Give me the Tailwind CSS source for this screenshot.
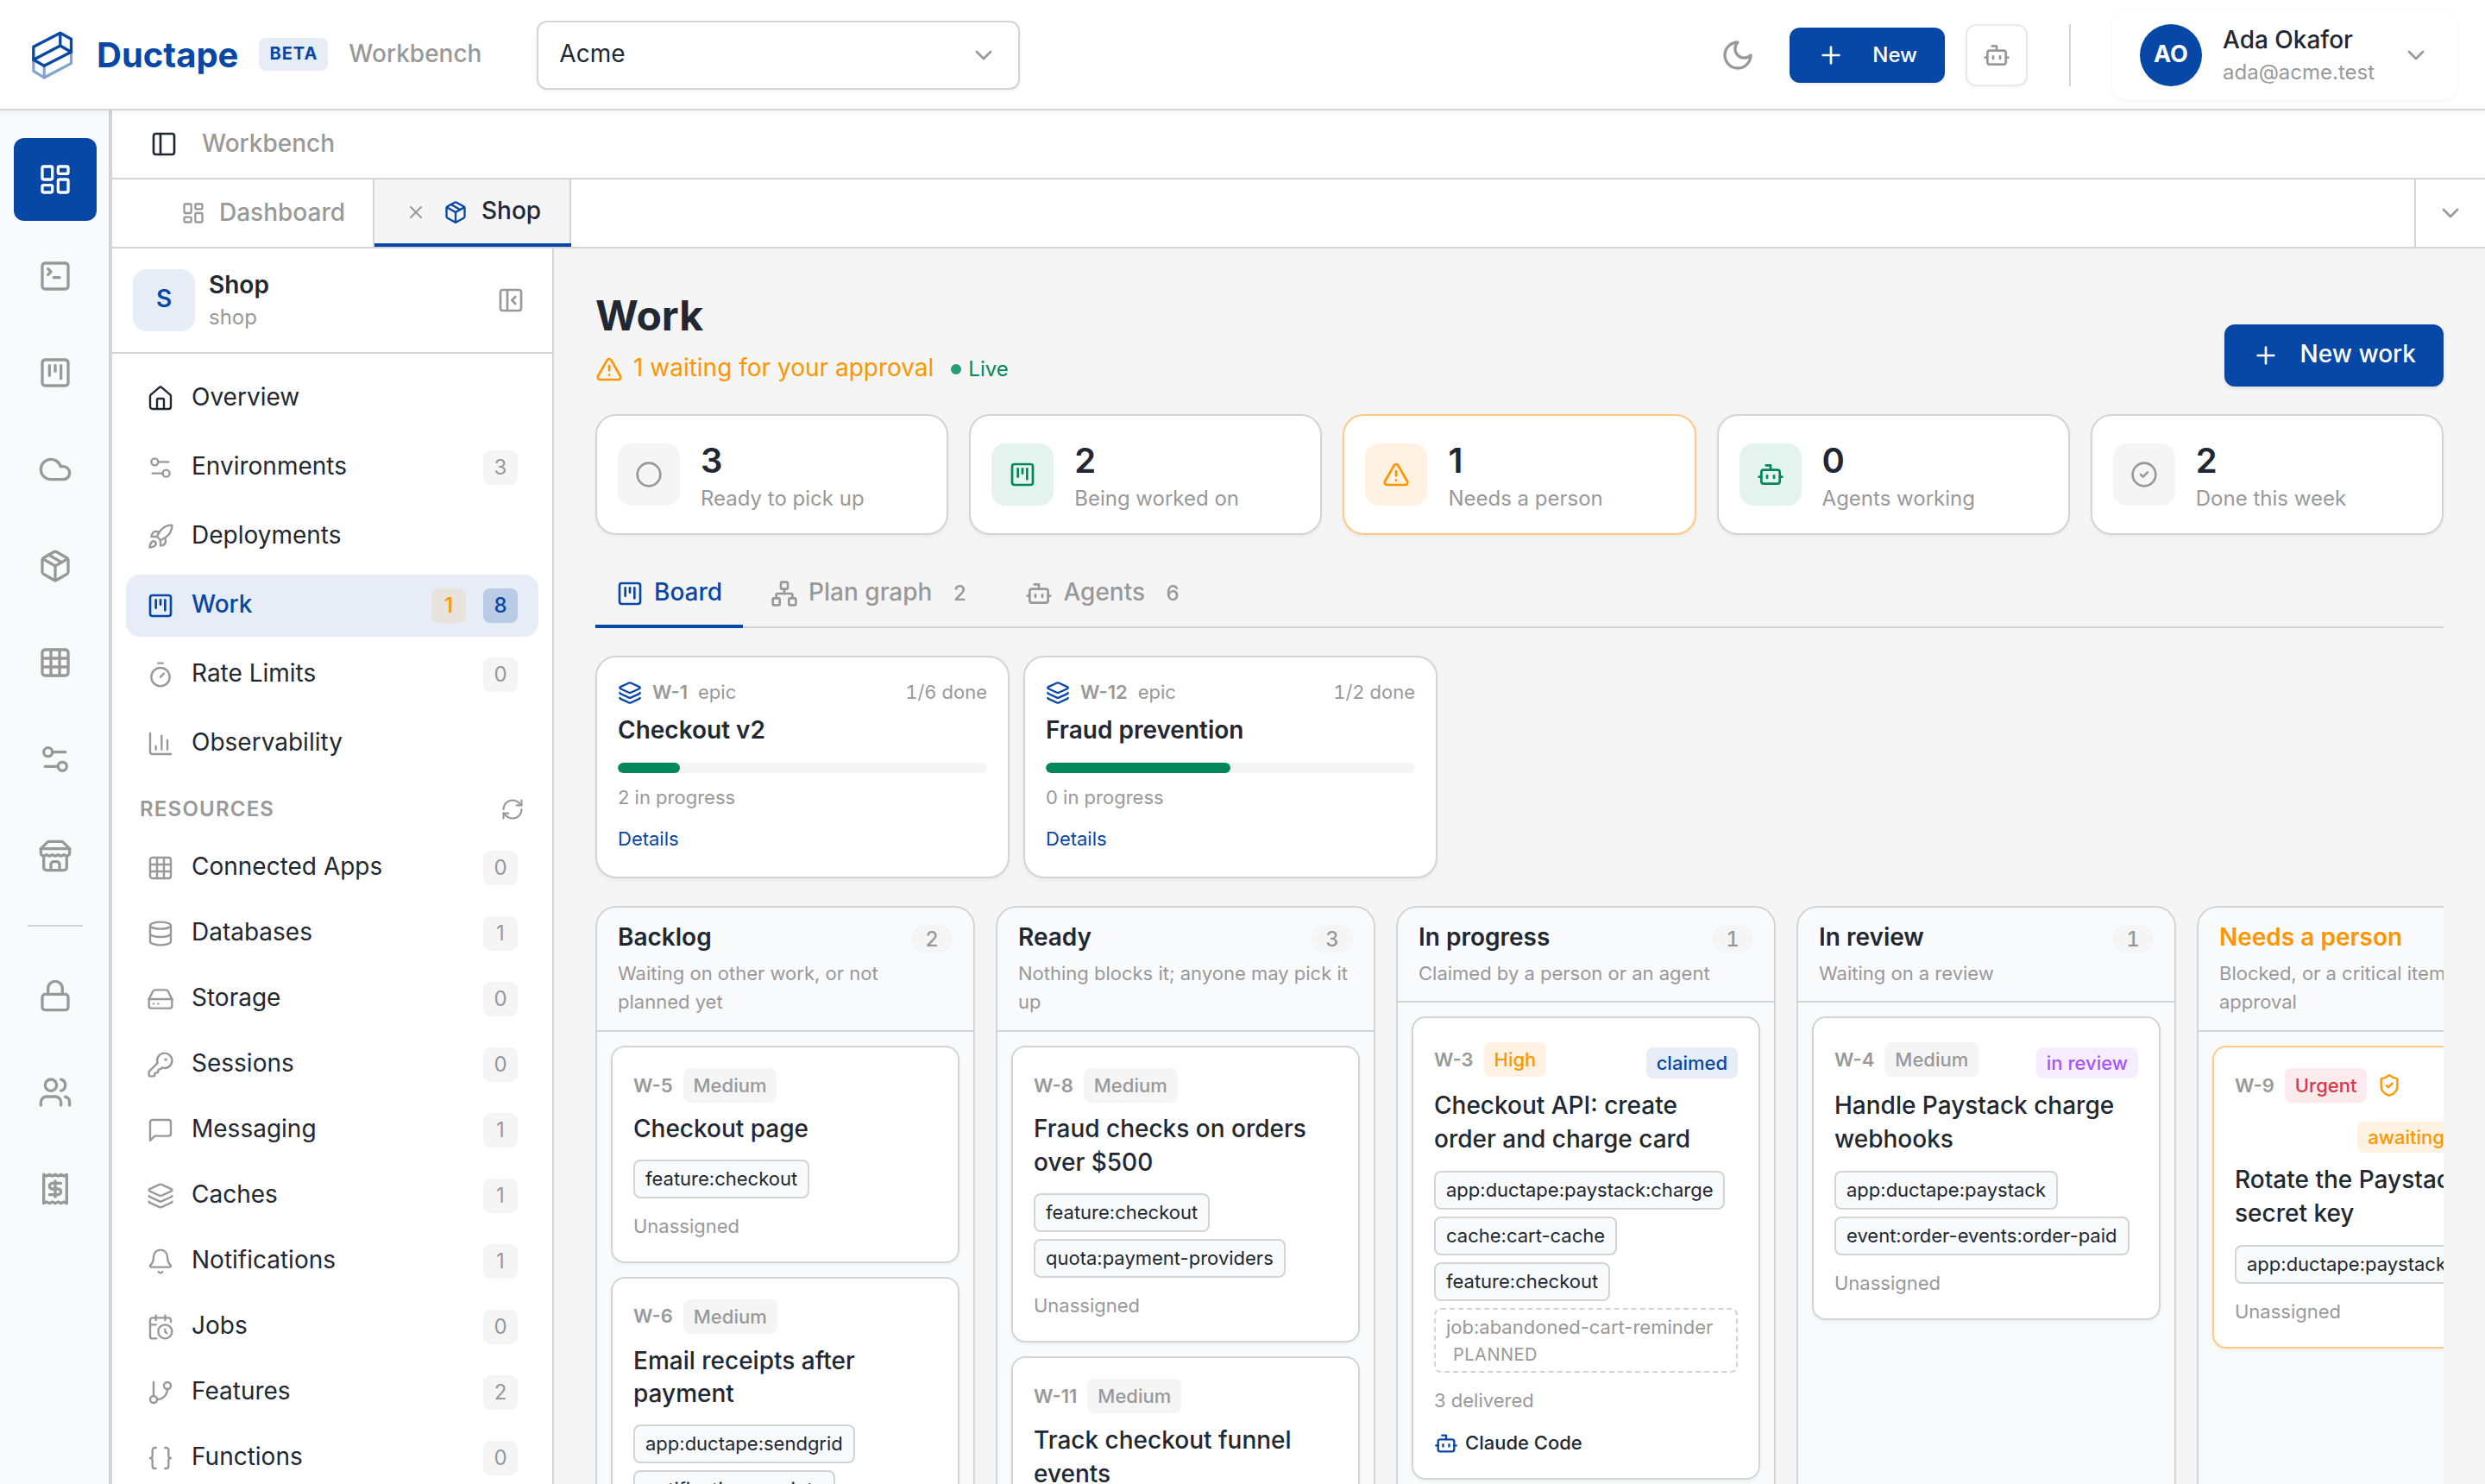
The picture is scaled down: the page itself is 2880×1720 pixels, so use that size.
<!DOCTYPE html>
<html lang="en">
<head>
<meta charset="utf-8">
<title>Ductape Workbench</title>
<script src="https://cdn.jsdelivr.net/npm/@tailwindcss/browser@4"></script>
</head>
<body class="w-[2880px] h-[1720px] overflow-hidden bg-[#f5f5f5] font-['Inter',sans-serif] text-[28px] leading-10 text-[#222831]">

<!-- icon sprite -->
<svg width="0" height="0" class="absolute" aria-hidden="true">
<defs>
<symbol id="dash" viewBox="0 0 24 24"><rect x="3" y="3" width="7" height="9" rx="1"/><rect x="14" y="3" width="7" height="5" rx="1"/><rect x="14" y="12" width="7" height="9" rx="1"/><rect x="3" y="16" width="7" height="5" rx="1"/></symbol>
<symbol id="terminal" viewBox="0 0 24 24"><path d="m7 11 2-2-2-2"/><path d="M11 13h4"/><rect x="3" y="3" width="18" height="18" rx="2"/></symbol>
<symbol id="kanban" viewBox="0 0 24 24"><rect x="3" y="3" width="18" height="18" rx="2"/><path d="M8 7v7"/><path d="M12 7v4"/><path d="M16 7v9"/></symbol>
<symbol id="cloud" viewBox="0 0 24 24"><path d="M17.5 19H9a7 7 0 1 1 6.71-9h1.79a4.5 4.5 0 1 1 0 9Z"/></symbol>
<symbol id="package" viewBox="0 0 24 24"><path d="M11 21.73a2 2 0 0 0 2 0l7-4A2 2 0 0 0 21 16V8a2 2 0 0 0-1-1.73l-7-4a2 2 0 0 0-2 0l-7 4A2 2 0 0 0 3 8v8a2 2 0 0 0 1 1.73z"/><path d="M12 22V12"/><path d="M3.3 7 12 12l8.7-5"/><path d="m7.5 4.27 9 5.15"/></symbol>
<symbol id="grid" viewBox="0 0 24 24"><rect x="3" y="3" width="18" height="18" rx="2"/><path d="M3 9h18"/><path d="M3 15h18"/><path d="M9 3v18"/><path d="M15 3v18"/></symbol>
<symbol id="settings" viewBox="0 0 24 24"><path d="M14 17H5"/><path d="M19 7h-9"/><circle cx="17" cy="17" r="3"/><circle cx="7" cy="7" r="3"/></symbol>
<symbol id="store" viewBox="0 0 24 24"><path d="m2 7 4.41-4.41A2 2 0 0 1 7.83 2h8.34a2 2 0 0 1 1.42.59L22 7"/><path d="M4 12v8a2 2 0 0 0 2 2h12a2 2 0 0 0 2-2v-8"/><path d="M15 22v-4a2 2 0 0 0-2-2h-2a2 2 0 0 0-2 2v4"/><path d="M2 7h20"/><path d="M22 7v3a2 2 0 0 1-2 2a2.7 2.7 0 0 1-1.59-.63.7.7 0 0 0-.82 0A2.7 2.7 0 0 1 16 12a2.7 2.7 0 0 1-1.59-.63.7.7 0 0 0-.82 0A2.7 2.7 0 0 1 12 12a2.7 2.7 0 0 1-1.59-.63.7.7 0 0 0-.82 0A2.7 2.7 0 0 1 8 12a2.7 2.7 0 0 1-1.59-.63.7.7 0 0 0-.82 0A2.7 2.7 0 0 1 4 12a2 2 0 0 1-2-2V7"/></symbol>
<symbol id="lock" viewBox="0 0 24 24"><rect x="3" y="11" width="18" height="11" rx="2"/><path d="M7 11V7a5 5 0 0 1 10 0v4"/></symbol>
<symbol id="users" viewBox="0 0 24 24"><path d="M16 21v-2a4 4 0 0 0-4-4H6a4 4 0 0 0-4 4v2"/><circle cx="9" cy="7" r="4"/><path d="M22 21v-2a4 4 0 0 0-3-3.87"/><path d="M16 3.13a4 4 0 0 1 0 7.75"/></symbol>
<symbol id="receipt" viewBox="0 0 24 24"><path d="M4 2v20l2-1 2 1 2-1 2 1 2-1 2 1 2-1 2 1V2l-2 1-2-1-2 1-2-1-2 1-2-1-2 1Z"/><path d="M16 8h-6a2 2 0 1 0 0 4h4a2 2 0 1 1 0 4H8"/><path d="M12 17.5v-11"/></symbol>
<symbol id="house" viewBox="0 0 24 24"><path d="M15 21v-8a1 1 0 0 0-1-1h-4a1 1 0 0 0-1 1v8"/><path d="M3 10a2 2 0 0 1 .709-1.528l7-5.999a2 2 0 0 1 2.582 0l7 5.999A2 2 0 0 1 21 10v9a2 2 0 0 1-2 2H5a2 2 0 0 1-2-2z"/></symbol>
<symbol id="rocket" viewBox="0 0 24 24"><path d="M4.5 16.5c-1.5 1.26-2 5-2 5s3.74-.5 5-2c.71-.84.7-2.13-.09-2.91a2.18 2.18 0 0 0-2.91-.09z"/><path d="m12 15-3-3a22 22 0 0 1 2-3.95A12.88 12.88 0 0 1 22 2c0 2.72-.78 7.5-6 11a22.35 22.35 0 0 1-4 2z"/><path d="M9 12H4s.55-3.03 2-4c1.62-1.08 5 0 5 0"/><path d="M12 15v5s3.03-.55 4-2c1.08-1.62 0-5 0-5"/></symbol>
<symbol id="timer" viewBox="0 0 24 24"><path d="M10 2h4"/><path d="m12 14 3-3"/><circle cx="12" cy="14" r="8"/></symbol>
<symbol id="chart" viewBox="0 0 24 24"><path d="M3 3v16a2 2 0 0 0 2 2h16"/><path d="M18 17V9"/><path d="M13 17V5"/><path d="M8 17v-3"/></symbol>
<symbol id="database" viewBox="0 0 24 24"><ellipse cx="12" cy="5" rx="9" ry="3"/><path d="M3 5v14a9 3 0 0 0 18 0V5"/><path d="M3 12a9 3 0 0 0 18 0"/></symbol>
<symbol id="drive" viewBox="0 0 24 24"><path d="M22 12H2"/><path d="M5.45 5.11 2 12v6a2 2 0 0 0 2 2h16a2 2 0 0 0 2-2v-6l-3.45-6.89A2 2 0 0 0 16.76 4H7.24a2 2 0 0 0-1.79 1.11z"/><path d="M6 16h.01"/><path d="M10 16h.01"/></symbol>
<symbol id="key" viewBox="0 0 24 24"><path d="M2.586 17.414A2 2 0 0 0 2 18.828V21a1 1 0 0 0 1 1h3a1 1 0 0 0 1-1v-1a1 1 0 0 1 1-1h1a1 1 0 0 0 1-1v-1a1 1 0 0 1 1-1h.172a2 2 0 0 0 1.414-.586l.814-.814a6.5 6.5 0 1 0-4-4z"/><circle cx="16.5" cy="7.5" r=".5"/></symbol>
<symbol id="message" viewBox="0 0 24 24"><path d="M21 15a2 2 0 0 1-2 2H7l-4 4V5a2 2 0 0 1 2-2h14a2 2 0 0 1 2 2z"/></symbol>
<symbol id="layers" viewBox="0 0 24 24"><path d="M12.83 2.18a2 2 0 0 0-1.66 0L2.6 6.08a1 1 0 0 0 0 1.83l8.58 3.91a2 2 0 0 0 1.66 0l8.58-3.9a1 1 0 0 0 0-1.83z"/><path d="M2 12a1 1 0 0 0 .58.91l8.6 3.91a2 2 0 0 0 1.65 0l8.58-3.9A1 1 0 0 0 22 12"/><path d="M2 17a1 1 0 0 0 .58.91l8.6 3.91a2 2 0 0 0 1.65 0l8.58-3.9A1 1 0 0 0 22 17"/></symbol>
<symbol id="bell" viewBox="0 0 24 24"><path d="M10.268 21a2 2 0 0 0 3.464 0"/><path d="M3.262 15.326A1 1 0 0 0 4 17h16a1 1 0 0 0 .74-1.673C19.41 13.956 18 12.499 18 8A6 6 0 0 0 6 8c0 4.499-1.411 5.956-2.738 7.326"/></symbol>
<symbol id="calclock" viewBox="0 0 24 24"><path d="M21 7.5V6a2 2 0 0 0-2-2H5a2 2 0 0 0-2 2v14a2 2 0 0 0 2 2h3.5"/><path d="M16 2v4"/><path d="M8 2v4"/><path d="M3 10h5"/><path d="M17.5 17.5 16 16.3V14"/><circle cx="16" cy="16" r="6"/></symbol>
<symbol id="branch" viewBox="0 0 24 24"><path d="M6 3v12"/><circle cx="18" cy="6" r="3"/><circle cx="6" cy="18" r="3"/><path d="M18 9a9 9 0 0 1-9 9"/></symbol>
<symbol id="braces" viewBox="0 0 24 24"><path d="M8 3H7a2 2 0 0 0-2 2v5a2 2 0 0 1-2 2 2 2 0 0 1 2 2v5c0 1.1.9 2 2 2h1"/><path d="M16 21h1a2 2 0 0 0 2-2v-5c0-1.1.9-2 2-2a2 2 0 0 1-2-2V5a2 2 0 0 0-2-2h-1"/></symbol>
<symbol id="panel" viewBox="0 0 24 24"><rect x="3" y="3" width="18" height="18" rx="2"/><path d="M9 3v18"/></symbol>
<symbol id="panelclose" viewBox="0 0 24 24"><rect x="3" y="3" width="18" height="18" rx="2"/><path d="M9 3v18"/><path d="m16 15-3-3 3-3"/></symbol>
<symbol id="refresh" viewBox="0 0 24 24"><path d="M3 12a9 9 0 0 1 9-9 9.75 9.75 0 0 1 6.74 2.74L21 8"/><path d="M21 3v5h-5"/><path d="M21 12a9 9 0 0 1-9 9 9.75 9.75 0 0 1-6.74-2.74L3 16"/><path d="M8 16H3v5"/></symbol>
<symbol id="alert" viewBox="0 0 24 24"><path d="m21.73 18-8-14a2 2 0 0 0-3.48 0l-8 14A2 2 0 0 0 4 21h16a2 2 0 0 0 1.73-3"/><path d="M12 9v4"/><path d="M12 17h.01"/></symbol>
<symbol id="circle" viewBox="0 0 24 24"><circle cx="12" cy="12" r="10"/></symbol>
<symbol id="check" viewBox="0 0 24 24"><circle cx="12" cy="12" r="10"/><path d="m9 12 2 2 4-4"/></symbol>
<symbol id="network" viewBox="0 0 24 24"><rect x="16" y="16" width="6" height="6" rx="1"/><rect x="2" y="16" width="6" height="6" rx="1"/><rect x="9" y="2" width="6" height="6" rx="1"/><path d="M5 16v-3a1 1 0 0 1 1-1h12a1 1 0 0 1 1 1v3"/><path d="M12 12V8"/></symbol>
<symbol id="bot" viewBox="0 0 24 24"><path d="M12 8V4H8"/><rect x="4" y="8" width="16" height="12" rx="2"/><path d="M2 14h2"/><path d="M20 14h2"/><path d="M15 13v2"/><path d="M9 13v2"/></symbol>
<symbol id="shield" viewBox="0 0 24 24"><path d="M20 13c0 5-3.5 7.5-7.66 8.95a1 1 0 0 1-.67-.01C7.5 20.5 4 18 4 13V6a1 1 0 0 1 1-1c2 0 4.5-1.2 6.24-2.72a1.17 1.17 0 0 1 1.52 0C14.51 3.81 17 5 19 5a1 1 0 0 1 1 1z"/><path d="m9 12 2 2 4-4"/></symbol>
<symbol id="moon" viewBox="0 0 24 24"><path d="M12 3a6 6 0 0 0 9 9 9 9 0 1 1-9-9Z"/></symbol>
<symbol id="plus" viewBox="0 0 24 24"><path d="M5 12h14"/><path d="M12 5v14"/></symbol>
<symbol id="x" viewBox="0 0 24 24"><path d="M18 6 6 18"/><path d="m6 6 12 12"/></symbol>
<symbol id="down" viewBox="0 0 24 24"><path d="m6 9 6 6 6-6"/></symbol>
</defs>
</svg>

<div class="flex h-[1720px] flex-col [&_svg]:shrink-0 [&_svg]:fill-none [&_svg]:stroke-current [&_svg]:stroke-2 [&_svg]:[stroke-linecap:round] [&_svg]:[stroke-linejoin:round]">

<!-- top bar -->
<header class="relative z-10 flex h-32 shrink-0 items-center border-b-2 border-[#d4d4d4] bg-white pt-0.5 pr-8 pl-9 text-[#999999] shadow-[0_2px_6px_rgba(0,0,0,0.06)]">
  <svg class="size-12" viewBox="35.5 40 48 48" overflow="visible">
    <g stroke="#83a3d3" stroke-width="3.2"><path d="M38.3 69.3v13l12.4 7.7L82 73.3v-13"/><path d="M50.7 76.3V90"/></g>
    <g stroke="#0747a6" stroke-width="3.3"><path d="M69.3 38.3 38.3 54.3v15l12.4 7L82 60.3v-15z"/><path d="M69.3 38.3V53L38.3 69.3"/><path d="M69.3 53 82 60.3"/></g>
  </svg>
  <span class="ml-7 text-[40px] leading-[48px] font-bold text-[#0747a6]">Ductape</span>
  <span class="-mt-0.5 ml-6 flex h-[38px] items-center rounded-lg bg-[#e6edf6] px-3 pb-[3px] text-[20px] leading-[30px] font-bold tracking-wider text-[#0747a6]">BETA</span>
  <span class="ml-6 w-[152px] pb-1 font-medium whitespace-nowrap">Workbench</span>
  <div class="ml-[66px] flex h-20 w-[560px] items-center justify-between rounded-xl border-2 border-[#d4d4d4] bg-white pr-6 pl-6 shadow-[0_2px_4px_rgba(0,0,0,0.05)]">
    <span class="pb-1 text-[#222831]">Acme</span>
    <svg class="size-8"><use href="#down"/></svg>
  </div>
  <div class="ml-auto flex items-center">
    <div class="flex size-[72px] items-center justify-center"><svg class="size-10"><use href="#moon"/></svg></div>
    <div class="ml-6 flex h-16 items-center gap-8 rounded-xl bg-[#0747a6] px-8 text-[24px] leading-8 font-medium text-white shadow-[0_2px_4px_rgba(0,0,0,0.08)]"><svg class="size-8"><use href="#plus"/></svg>New</div>
    <div class="ml-6 flex size-[72px] items-center justify-center rounded-xl border-2 border-[#e9e9e9] bg-white shadow-[0_2px_4px_rgba(0,0,0,0.04)]"><svg class="size-8"><use href="#bot"/></svg></div>
    <div class="ml-12 h-[72px] w-0.5 bg-[#d4d4d4]"></div>
    <div class="ml-12 flex h-[104px] w-[400px] items-center rounded-2xl bg-white px-8 shadow-[0_1px_4px_rgba(0,0,0,0.06)]">
      <div class="flex size-[72px] items-center justify-center rounded-full bg-[#0747a6] pb-[3px] text-[27px] font-bold text-white">AO</div>
      <div class="ml-6">
        <div class="-mt-0.5 mb-0.5 leading-10 font-medium text-[#222831]">Ada Okafor</div>
        <div class="text-[24px] leading-8">ada@acme.test</div>
      </div>
      <svg class="ml-auto size-8"><use href="#down"/></svg>
    </div>
  </div>
</header>

<div class="flex min-h-0 flex-1">

<!-- icon rail -->
<nav class="flex w-[130px] shrink-0 flex-col gap-4 border-r-4 border-[#d4d4d4] bg-[#f9fafc] px-4 pt-8 text-[#999999]">
  <div class="flex h-24 w-24 shrink-0 items-center justify-center rounded-xl bg-[#0747a6] text-white"><svg class="size-10"><use href="#dash"/></svg></div>
  <div class="flex h-24 w-24 shrink-0 items-center justify-center"><svg class="size-10"><use href="#terminal"/></svg></div>
  <div class="flex h-24 w-24 shrink-0 items-center justify-center"><svg class="size-10"><use href="#kanban"/></svg></div>
  <div class="flex h-24 w-24 shrink-0 items-center justify-center"><svg class="size-10"><use href="#cloud"/></svg></div>
  <div class="flex h-24 w-24 shrink-0 items-center justify-center"><svg class="size-10"><use href="#package"/></svg></div>
  <div class="flex h-24 w-24 shrink-0 items-center justify-center"><svg class="size-10"><use href="#grid"/></svg></div>
  <div class="flex h-24 w-24 shrink-0 items-center justify-center"><svg class="size-10"><use href="#settings"/></svg></div>
  <div class="flex h-24 w-24 shrink-0 items-center justify-center"><svg class="size-10"><use href="#store"/></svg></div>
  <div class="my-4 ml-4 h-0.5 w-16 shrink-0 bg-[#d4d4d4]"></div>
  <div class="flex h-24 w-24 shrink-0 items-center justify-center"><svg class="size-10"><use href="#lock"/></svg></div>
  <div class="flex h-24 w-24 shrink-0 items-center justify-center"><svg class="size-10"><use href="#users"/></svg></div>
  <div class="flex h-24 w-24 shrink-0 items-center justify-center"><svg class="size-10"><use href="#receipt"/></svg></div>
</nav>

<div class="flex min-w-0 flex-1 flex-col">

<!-- breadcrumb -->
<div class="flex h-20 shrink-0 items-center border-b-2 border-[#d4d4d4] bg-white pl-11 text-[#999999]">
  <svg class="size-8 text-[#222831]"><use href="#panel"/></svg>
  <span class="ml-7 pb-0.5 font-medium">Workbench</span>
</div>

<!-- tab strip -->
<div class="flex h-20 shrink-0 border-b-2 border-[#d4d4d4] bg-white text-[#999999]">
  <div class="flex w-[304px] items-center gap-4 border-r-2 border-[#d4d4d4] pl-20"><svg class="size-7"><use href="#dash"/></svg><span class="pb-0.5 font-medium">Dashboard</span></div>
  <div class="relative flex w-[228px] items-center border-r-2 border-[#d4d4d4] bg-[#f5f5f5] pb-0.5 pl-9">
    <svg class="size-6"><use href="#x"/></svg>
    <svg class="ml-5 size-7 text-[#0747a6]"><use href="#package"/></svg>
    <span class="ml-4 pb-1 font-medium text-[#222831]">Shop</span>
    <div class="absolute -right-0.5 bottom-0 left-0 h-1 bg-[#0747a6]"></div>
  </div>
  <div class="ml-auto flex w-[82px] items-center justify-center border-l-2 border-[#d4d4d4]"><svg class="size-8"><use href="#down"/></svg></div>
</div>

<div class="flex min-h-0 flex-1">

<!-- product sidebar -->
<aside class="flex w-[512px] shrink-0 flex-col overflow-hidden border-r-2 border-[#d4d4d4] bg-white">
  <div class="flex h-[122px] shrink-0 items-center border-b-2 border-[#d4d4d4] pr-8 pl-6">
    <div class="flex size-[72px] items-center justify-center rounded-2xl bg-[#e6edf6] pb-1 font-semibold text-[#0747a6]">S</div>
    <div class="ml-4">
      <div class="-mt-0.5 mb-0.5 font-semibold">Shop</div>
      <div class="text-[24px] leading-8 text-[#999999]">shop</div>
    </div>
    <svg class="ml-auto size-8 text-[#999999]"><use href="#panelclose"/></svg>
  </div>

  <div class="flex shrink-0 flex-col gap-2 px-4 pt-4 [&_svg]:size-8 [&_svg]:stroke-[1.8] [&_svg]:text-[#999999]">
    <div class="flex h-[72px] items-center px-6"><svg class="text-[#222831]!"><use href="#house"/></svg><span class="ml-5 pb-1">Overview</span></div>
    <div class="flex h-[72px] items-center px-6"><svg><use href="#settings"/></svg><span class="ml-5 pb-1">Environments</span><span class="ml-auto flex size-10 items-center justify-center rounded-lg bg-[#f5f5f5] text-[24px] text-[#999999]">3</span></div>
    <div class="flex h-[72px] items-center px-6"><svg><use href="#rocket"/></svg><span class="ml-5 pb-1">Deployments</span></div>
    <div class="flex h-[72px] items-center rounded-2xl bg-[#e6edf6] px-6 font-medium text-[#0747a6]"><svg class="text-[#0747a6]! stroke-2!"><use href="#kanban"/></svg><span class="ml-5 pb-1">Work</span><span class="ml-auto flex size-10 items-center justify-center rounded-lg bg-[#ff9500]/10 text-[24px] text-[#ff9500]">1</span><span class="ml-5 flex size-10 items-center justify-center rounded-lg bg-[#0747a6]/20 text-[24px]">8</span></div>
    <div class="flex h-[72px] items-center px-6"><svg><use href="#timer"/></svg><span class="ml-5 pb-1">Rate Limits</span><span class="ml-auto flex size-10 items-center justify-center rounded-lg bg-[#f5f5f5] text-[24px] text-[#999999]">0</span></div>
    <div class="flex h-[72px] items-center px-6"><svg><use href="#chart"/></svg><span class="ml-5 pb-1">Observability</span></div>
  </div>

  <div class="flex h-[72px] shrink-0 items-center justify-between pt-2 pr-8 pl-8 text-[24px] leading-8 font-semibold tracking-wider text-[#999999]">RESOURCES<svg class="size-7 stroke-[1.8]!"><use href="#refresh"/></svg></div>

  <div class="flex shrink-0 flex-col gap-1 px-4 [&_svg]:size-8 [&_svg]:stroke-[1.8] [&_svg]:text-[#999999]">
    <div class="flex h-[72px] items-center px-6"><svg><use href="#grid"/></svg><span class="ml-5 pb-1">Connected Apps</span><span class="ml-auto flex size-10 items-center justify-center rounded-lg bg-[#f5f5f5] text-[24px] text-[#999999]">0</span></div>
    <div class="flex h-[72px] items-center px-6"><svg><use href="#database"/></svg><span class="ml-5 pb-1">Databases</span><span class="ml-auto flex size-10 items-center justify-center rounded-lg bg-[#f5f5f5] text-[24px] text-[#999999]">1</span></div>
    <div class="flex h-[72px] items-center px-6"><svg><use href="#drive"/></svg><span class="ml-5 pb-1">Storage</span><span class="ml-auto flex size-10 items-center justify-center rounded-lg bg-[#f5f5f5] text-[24px] text-[#999999]">0</span></div>
    <div class="flex h-[72px] items-center px-6"><svg><use href="#key"/></svg><span class="ml-5 pb-1">Sessions</span><span class="ml-auto flex size-10 items-center justify-center rounded-lg bg-[#f5f5f5] text-[24px] text-[#999999]">0</span></div>
    <div class="flex h-[72px] items-center px-6"><svg><use href="#message"/></svg><span class="ml-5 pb-1">Messaging</span><span class="ml-auto flex size-10 items-center justify-center rounded-lg bg-[#f5f5f5] text-[24px] text-[#999999]">1</span></div>
    <div class="flex h-[72px] items-center px-6"><svg><use href="#layers"/></svg><span class="ml-5 pb-1">Caches</span><span class="ml-auto flex size-10 items-center justify-center rounded-lg bg-[#f5f5f5] text-[24px] text-[#999999]">1</span></div>
    <div class="flex h-[72px] items-center px-6"><svg><use href="#bell"/></svg><span class="ml-5 pb-1">Notifications</span><span class="ml-auto flex size-10 items-center justify-center rounded-lg bg-[#f5f5f5] text-[24px] text-[#999999]">1</span></div>
    <div class="flex h-[72px] items-center px-6"><svg><use href="#calclock"/></svg><span class="ml-5 pb-1">Jobs</span><span class="ml-auto flex size-10 items-center justify-center rounded-lg bg-[#f5f5f5] text-[24px] text-[#999999]">0</span></div>
    <div class="flex h-[72px] items-center px-6"><svg><use href="#branch"/></svg><span class="ml-5 pb-1">Features</span><span class="ml-auto flex size-10 items-center justify-center rounded-lg bg-[#f5f5f5] text-[24px] text-[#999999]">2</span></div>
    <div class="flex h-[72px] items-center px-6"><svg><use href="#braces"/></svg><span class="ml-5 pb-1">Functions</span><span class="ml-auto flex size-10 items-center justify-center rounded-lg bg-[#f5f5f5] text-[24px] text-[#999999]">0</span></div>
  </div>
</aside>

<!-- work page -->
<main class="flex min-w-0 flex-1 flex-col overflow-hidden px-12 pt-[46px]">
  <div class="flex shrink-0 items-end justify-between">
    <div>
      <h1 class="text-[48px] leading-[64px] font-bold">Work</h1>
      <div class="mt-2.5 flex h-10 items-center text-[#ff9500]">
        <svg class="size-8"><use href="#alert"/></svg>
        <span class="ml-3 pb-1">1 waiting for your approval</span>
        <span class="ml-5 size-3 rounded-full bg-[#2b9b74]"></span>
        <span class="ml-2 text-[24px] leading-8 text-[#00875a]">Live</span>
      </div>
    </div>
    <div class="flex h-[72px] items-center rounded-xl bg-[#0747a6] px-8 font-medium text-white shadow-[0_2px_4px_rgba(0,0,0,0.1)]"><svg class="size-8"><use href="#plus"/></svg><span class="ml-6 pb-1">New work</span></div>
  </div>

  <!-- stats -->
  <div class="mt-8 grid shrink-0 grid-cols-5 gap-6">
    <div class="flex h-[140px] items-center gap-6 rounded-3xl border-2 border-[#d4d4d4] bg-white px-6 shadow-[0_2px_4px_rgba(0,0,0,0.05)]">
      <div class="flex size-[72px] items-center justify-center rounded-2xl bg-[#f5f5f5] text-[#999999]"><svg class="size-8"><use href="#circle"/></svg></div>
      <div><div class="text-[40px] leading-[56px] font-semibold">3</div><div class="text-[24px] leading-8 text-[#999999]">Ready to pick up</div></div>
    </div>
    <div class="flex h-[140px] items-center gap-6 rounded-3xl border-2 border-[#d4d4d4] bg-white px-6 shadow-[0_2px_4px_rgba(0,0,0,0.05)]">
      <div class="flex size-[72px] items-center justify-center rounded-2xl bg-[#e5f3ee] text-[#00875a]"><svg class="size-8"><use href="#kanban"/></svg></div>
      <div><div class="text-[40px] leading-[56px] font-semibold">2</div><div class="text-[24px] leading-8 text-[#999999]">Being worked on</div></div>
    </div>
    <div class="flex h-[140px] items-center gap-6 rounded-3xl border-2 border-[#ffca80] bg-white px-6 shadow-[0_2px_4px_rgba(0,0,0,0.05)]">
      <div class="flex size-[72px] items-center justify-center rounded-2xl bg-[#fff2e3] text-[#ff9500]"><svg class="size-8"><use href="#alert"/></svg></div>
      <div><div class="text-[40px] leading-[56px] font-semibold">1</div><div class="text-[24px] leading-8 text-[#999999]">Needs a person</div></div>
    </div>
    <div class="flex h-[140px] items-center gap-6 rounded-3xl border-2 border-[#d4d4d4] bg-white px-6 shadow-[0_2px_4px_rgba(0,0,0,0.05)]">
      <div class="flex size-[72px] items-center justify-center rounded-2xl bg-[#e5f3ee] text-[#00875a]"><svg class="size-8"><use href="#bot"/></svg></div>
      <div><div class="text-[40px] leading-[56px] font-semibold">0</div><div class="text-[24px] leading-8 text-[#999999]">Agents working</div></div>
    </div>
    <div class="flex h-[140px] items-center gap-6 rounded-3xl border-2 border-[#d4d4d4] bg-white px-6 shadow-[0_2px_4px_rgba(0,0,0,0.05)]">
      <div class="flex size-[72px] items-center justify-center rounded-2xl bg-[#f5f5f5] text-[#999999]"><svg class="size-8"><use href="#check"/></svg></div>
      <div><div class="text-[40px] leading-[56px] font-semibold">2</div><div class="text-[24px] leading-8 text-[#999999]">Done this week</div></div>
    </div>
  </div>

  <!-- view tabs -->
  <div class="mt-7 flex h-20 shrink-0 gap-2 border-b-2 border-[#d4d4d4] font-medium text-[#999999]">
    <div class="-mb-0.5 flex items-center gap-3 border-b-4 border-[#0747a6] px-6 pt-1 text-[#0747a6]"><svg class="size-8"><use href="#kanban"/></svg><span class="pb-1">Board</span></div>
    <div class="-mb-0.5 flex items-center gap-3 border-b-4 border-transparent px-6 pt-1"><svg class="size-8"><use href="#network"/></svg><span class="pb-1">Plan graph</span><span class="w-10 text-center text-[24px]">2</span></div>
    <div class="-mb-0.5 flex items-center gap-3 border-b-4 border-transparent px-6 pt-1"><svg class="size-8"><use href="#bot"/></svg><span class="pb-1">Agents</span><span class="w-10 text-center text-[24px]">6</span></div>
  </div>

  <!-- epics -->
  <div class="mt-8 flex shrink-0 gap-4 text-[22px] leading-[33px] text-[#999999]">
    <div class="h-[258px] w-[480px] rounded-3xl border-2 border-[#d4d4d4] bg-white p-6 shadow-[0_2px_4px_rgba(0,0,0,0.05)]">
      <div class="flex items-center gap-3"><svg class="size-7 text-[#0747a6]"><use href="#layers"/></svg><span class="font-semibold">W-1</span><span>epic</span><span class="ml-auto tabular-nums">1/6 done</span></div>
      <div class="mt-[7px] text-[28px] leading-10 font-semibold text-[#222831]">Checkout v2</div>
      <div class="mt-[18px] h-3 overflow-hidden rounded-full bg-[#f5f5f5]"><div class="h-3 rounded-full bg-[#00875a]" style="width:16.8%"></div></div>
      <div class="mt-3">2 in progress</div>
      <div class="mt-[15px] text-[#0747a6]">Details</div>
    </div>
    <div class="h-[258px] w-[480px] rounded-3xl border-2 border-[#d4d4d4] bg-white p-6 shadow-[0_2px_4px_rgba(0,0,0,0.05)]">
      <div class="flex items-center gap-3"><svg class="size-7 text-[#0747a6]"><use href="#layers"/></svg><span class="font-semibold">W-12</span><span>epic</span><span class="ml-auto tabular-nums">1/2 done</span></div>
      <div class="mt-[7px] text-[28px] leading-10 font-semibold text-[#222831]">Fraud prevention</div>
      <div class="mt-[18px] h-3 overflow-hidden rounded-full bg-[#f5f5f5]"><div class="h-3 rounded-full bg-[#00875a]" style="width:50%"></div></div>
      <div class="mt-3">0 in progress</div>
      <div class="mt-[15px] text-[#0747a6]">Details</div>
    </div>
  </div>

  <!-- board -->
  <div class="mt-8 flex h-[900px] shrink-0 gap-6 overflow-hidden text-[22px] leading-[33px] text-[#999999]">

    <section class="w-[440px] shrink-0 rounded-t-3xl border-2 border-[#d4d4d4] bg-[#f9fafc]">
      <div class="border-b-2 border-[#d4d4d4] px-6 pt-4 pb-4">
        <div class="flex h-10 items-center justify-between"><span class="pb-1 text-[28px] leading-10 font-semibold text-[#222831]">Backlog</span><span class="flex h-8 w-12 items-center justify-center rounded-full bg-[#f5f5f5] text-[24px] font-medium tabular-nums">2</span></div>
        <p class="mt-1">Waiting on other work, or not planned yet</p>
      </div>
      <div class="flex flex-col gap-4 p-4">
        <article class="rounded-2xl border-2 border-[#d4d4d4] bg-white p-6 shadow-[0_2px_4px_rgba(0,0,0,0.05)]">
          <div class="flex h-10 items-center gap-3"><span class="font-semibold">W-5</span><span class="rounded-lg bg-[#f5f5f5] px-3 leading-10 font-medium">Medium</span></div>
          <h3 class="mt-[11px] text-[28px] leading-[38.5px] font-medium text-[#222831]">Checkout page</h3>
          <div class="mt-4 flex flex-wrap gap-2 text-[#222831]"><span class="rounded-lg border-2 border-[#d4d4d4] bg-[#f9fafc] px-3 py-1">feature:checkout</span></div>
          <div class="mt-4">Unassigned</div>
        </article>
        <article class="rounded-2xl border-2 border-[#d4d4d4] bg-white p-6 shadow-[0_2px_4px_rgba(0,0,0,0.05)]">
          <div class="flex h-10 items-center gap-3"><span class="font-semibold">W-6</span><span class="rounded-lg bg-[#f5f5f5] px-3 leading-10 font-medium">Medium</span></div>
          <h3 class="mt-3 text-[28px] leading-[38.5px] font-medium text-[#222831]">Email receipts after payment</h3>
          <div class="mt-4 flex flex-wrap gap-2 text-[#222831]"><span class="rounded-lg border-2 border-[#d4d4d4] bg-[#f9fafc] px-3 py-1">app:ductape:sendgrid</span><span class="rounded-lg border-2 border-[#d4d4d4] bg-[#f9fafc] px-3 py-1">notification:receipts</span></div>
          <div class="mt-4">Unassigned</div>
        </article>
      </div>
    </section>

    <section class="w-[440px] shrink-0 rounded-t-3xl border-2 border-[#d4d4d4] bg-[#f9fafc]">
      <div class="border-b-2 border-[#d4d4d4] px-6 pt-4 pb-4">
        <div class="flex h-10 items-center justify-between"><span class="pb-1 text-[28px] leading-10 font-semibold text-[#222831]">Ready</span><span class="flex h-8 w-12 items-center justify-center rounded-full bg-[#f5f5f5] text-[24px] font-medium tabular-nums">3</span></div>
        <p class="mt-1">Nothing blocks it; anyone may pick it up</p>
      </div>
      <div class="flex flex-col gap-4 p-4">
        <article class="rounded-2xl border-2 border-[#d4d4d4] bg-white p-6 shadow-[0_2px_4px_rgba(0,0,0,0.05)]">
          <div class="flex h-10 items-center gap-3"><span class="font-semibold">W-8</span><span class="rounded-lg bg-[#f5f5f5] px-3 leading-10 font-medium">Medium</span></div>
          <h3 class="mt-[11px] text-[28px] leading-[38.5px] font-medium text-[#222831]">Fraud checks on orders over $500</h3>
          <div class="mt-[17px] flex flex-wrap gap-2 text-[#222831]"><span class="rounded-lg border-2 border-[#d4d4d4] bg-[#f9fafc] px-3 py-1">feature:checkout</span><span class="rounded-lg border-2 border-[#d4d4d4] bg-[#f9fafc] px-3 py-1">quota:payment-providers</span></div>
          <div class="mt-4">Unassigned</div>
        </article>
        <article class="rounded-2xl border-2 border-[#d4d4d4] bg-white p-6 shadow-[0_2px_4px_rgba(0,0,0,0.05)]">
          <div class="flex h-10 items-center gap-3"><span class="font-semibold">W-11</span><span class="rounded-lg bg-[#f5f5f5] px-3 leading-10 font-medium">Medium</span></div>
          <h3 class="mt-3 text-[28px] leading-[38.5px] font-medium text-[#222831]">Track checkout funnel events</h3>
          <div class="mt-4">Unassigned</div>
        </article>
      </div>
    </section>

    <section class="w-[440px] shrink-0 rounded-t-3xl border-2 border-[#d4d4d4] bg-[#f9fafc]">
      <div class="border-b-2 border-[#d4d4d4] px-6 pt-4 pb-[15px]">
        <div class="flex h-10 items-center justify-between"><span class="pb-1 text-[28px] leading-10 font-semibold text-[#222831]">In progress</span><span class="flex h-8 w-12 items-center justify-center rounded-full bg-[#f5f5f5] text-[24px] font-medium tabular-nums">1</span></div>
        <p class="mt-1">Claimed by a person or an agent</p>
      </div>
      <div class="flex flex-col gap-4 p-4">
        <article class="rounded-2xl border-2 border-[#d4d4d4] bg-white p-6 shadow-[0_2px_4px_rgba(0,0,0,0.05)]">
          <div class="flex h-12 items-center gap-3"><span class="font-semibold">W-3</span><span class="rounded-lg bg-[#fff2e3] px-3 leading-10 font-medium text-[#ff9500]">High</span><span class="mt-2 ml-auto rounded-lg bg-[#e6edf6] px-3 leading-9 font-medium text-[#0747a6]">claimed</span></div>
          <h3 class="mt-2.5 text-[28px] leading-[38.5px] font-medium text-[#222831]">Checkout API: create order and charge card</h3>
          <div class="mt-[18px] flex flex-wrap gap-2 text-[#222831]">
            <span class="rounded-lg border-2 border-[#d4d4d4] bg-[#f9fafc] px-3 py-1">app:ductape:paystack:charge</span>
            <span class="rounded-lg border-2 border-[#d4d4d4] bg-[#f9fafc] px-3 py-1">cache:cart-cache</span>
            <span class="rounded-lg border-2 border-[#d4d4d4] bg-[#f9fafc] px-3 py-1">feature:checkout</span>
            <span class="w-full rounded-lg border-2 border-dashed border-[#d4d4d4] bg-white px-3 py-1 text-[#999999]">job:abandoned-cart-reminder<span class="ml-2 block text-[20px] leading-[30px] tracking-wide">PLANNED</span></span>
          </div>
          <div class="mt-4">3 delivered</div>
          <div class="mt-4 flex items-center gap-2 font-medium text-[#222831]"><svg class="size-7 text-[#0747a6]"><use href="#bot"/></svg>Claude Code</div>
        </article>
      </div>
    </section>

    <section class="w-[440px] shrink-0 rounded-t-3xl border-2 border-[#d4d4d4] bg-[#f9fafc]">
      <div class="border-b-2 border-[#d4d4d4] px-6 pt-4 pb-[15px]">
        <div class="flex h-10 items-center justify-between"><span class="pb-1 text-[28px] leading-10 font-semibold text-[#222831]">In review</span><span class="flex h-8 w-12 items-center justify-center rounded-full bg-[#f5f5f5] text-[24px] font-medium tabular-nums">1</span></div>
        <p class="mt-1">Waiting on a review</p>
      </div>
      <div class="flex flex-col gap-4 p-4">
        <article class="rounded-2xl border-2 border-[#d4d4d4] bg-white p-6 shadow-[0_2px_4px_rgba(0,0,0,0.05)]">
          <div class="flex h-12 items-center gap-3"><span class="font-semibold">W-4</span><span class="rounded-lg bg-[#f5f5f5] px-3 leading-10 font-medium">Medium</span><span class="mt-2 ml-auto rounded-lg bg-[#f6eefe] px-3 leading-9 font-medium text-[#a855f7]">in review</span></div>
          <h3 class="mt-2.5 text-[28px] leading-[38.5px] font-medium text-[#222831]">Handle Paystack charge webhooks</h3>
          <div class="mt-[18px] flex flex-wrap gap-2 text-[#222831]"><span class="rounded-lg border-2 border-[#d4d4d4] bg-[#f9fafc] px-3 py-1">app:ductape:paystack</span><span class="rounded-lg border-2 border-[#d4d4d4] bg-[#f9fafc] px-3 py-1">event:order-events:order-paid</span></div>
          <div class="mt-4">Unassigned</div>
        </article>
      </div>
    </section>

    <section class="w-[440px] shrink-0 rounded-t-3xl border-2 border-[#d4d4d4] bg-[#f9fafc]">
      <div class="border-b-2 border-[#d4d4d4] px-6 pt-4 pb-4">
        <div class="flex h-10 items-center justify-between"><span class="pb-1 text-[28px] leading-10 font-semibold text-[#ff9500]">Needs a person</span></div>
        <p class="mt-1">Blocked, or a critical item needs approval</p>
      </div>
      <div class="flex flex-col gap-4 p-4">
        <article class="rounded-2xl border-2 border-[#ffca80] bg-white p-6 shadow-[0_2px_4px_rgba(0,0,0,0.05)]">
          <div class="flex h-10 items-center gap-3"><span class="font-semibold">W-9</span><span class="rounded-lg bg-[#fbebec] px-3 leading-10 font-medium text-[#dc3545]">Urgent</span><svg class="size-7 text-[#ff9500]"><use href="#shield"/></svg></div>
          <div class="mt-3 flex h-12 items-center"><span class="mt-2 ml-auto rounded-lg bg-[#fff2e3] px-3 leading-9 font-medium whitespace-nowrap text-[#ff9500]">awaiting approval</span></div>
          <h3 class="mt-2.5 text-[28px] leading-[38.5px] font-medium text-[#222831]">Rotate the Paystack secret key</h3>
          <div class="mt-[18px] flex flex-wrap gap-2 text-[#222831]"><span class="rounded-lg border-2 border-[#d4d4d4] bg-[#f9fafc] px-3 py-1">app:ductape:paystack</span></div>
          <div class="mt-4">Unassigned</div>
        </article>
      </div>
    </section>
  </div>
</main>
</div>
</div>
</div>
</div>
</body>
</html>
